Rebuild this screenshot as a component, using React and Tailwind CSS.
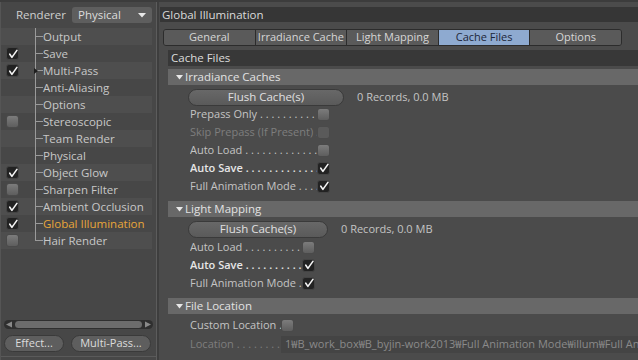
import React from 'react';

const font = { fontFamily: '"Open Sans", "Noto Sans CJK KR", sans-serif' };

const treeItems = [
  { label: 'Output', check: null },
  { label: 'Save', check: true },
  { label: 'Multi-Pass', check: true, arrow: true },
  { label: 'Anti-Aliasing', check: null },
  { label: 'Options', check: null },
  { label: 'Stereoscopic', check: false },
  { label: 'Team Render', check: null },
  { label: 'Physical', check: null },
  { label: 'Object Glow', check: true },
  { label: 'Sharpen Filter', check: false },
  { label: 'Ambient Occlusion', check: true },
  { label: 'Global Illumination', check: true, active: true },
  { label: 'Hair Render', check: false },
];

const tabs = ['General', 'Irradiance Cache', 'Light Mapping', 'Cache Files', 'Options'];

const dots = ' . . . . . . . . . . . . . . . . . . . . . . . .';

function Check({ on, dim }) {
  if (on) {
    return (
      <span className="flex h-[13px] w-[13px] shrink-0 items-center justify-center rounded-[3px] bg-[#222222] border border-[#444]">
        <svg width="10" height="10" viewBox="0 0 10 10">
          <path d="M1.8 5.2 L3.9 8.4 L8.9 1.4" fill="none" stroke="#f4f4f4" strokeWidth="1.6" strokeLinecap="round" strokeLinejoin="round" />
        </svg>
      </span>
    );
  }
  return (
    <span className={`block h-[13px] w-[13px] shrink-0 rounded-[3px] border border-[#4a4a4a] ${dim ? 'bg-[#5a5a5a]' : 'bg-gradient-to-b from-[#7c7c7c] to-[#5e5e5e]'}`} />
  );
}

function Option({ label, on, width, bold, dim }) {
  return (
    <div className="flex h-[18px] items-center pl-[22px]">
      <span
        className={`block overflow-hidden whitespace-nowrap text-[11px] leading-[18px] ${bold ? 'font-semibold text-[#e6e6e6]' : dim ? 'text-[#7e7e7e]' : 'text-[#c4c4c4]'}`}
        style={{ width }}
      >
        {label}
        {dots}
      </span>
      <Check on={on} dim={dim} />
    </div>
  );
}

function GroupHeader({ children }) {
  return (
    <div className="flex h-[16px] items-center bg-[#686868] pl-[8px] text-[11.5px] text-[#e2e2e2]">
      <svg width="7" height="5" viewBox="0 0 7 5" className="mr-[2px]">
        <path d="M0 0 L7 0 L3.5 4.5 Z" fill="#e8e8e8" />
      </svg>
      {children}
    </div>
  );
}

function Flush({ width, info }) {
  return (
    <div className="flex h-[20px] items-center pl-[20px] pt-[4px]">
      <div
        className="flex h-[17px] items-center justify-center rounded-full border border-[#3a3a3a] bg-gradient-to-b from-[#686868] to-[#5a5a5a] text-[11.5px] text-[#e0e0e0]"
        style={{ width }}
      >
        Flush Cache(s)
      </div>
      <span className="ml-[13px] text-[11px] text-[#c4c4c4]">{info}</span>
    </div>
  );
}

export default function App() {
  return (
    <div className="flex h-[360px] w-[638px] overflow-hidden bg-[#4b4b4b] border-t-2 border-[#3c3c3c]" style={font}>
      {/* left side */}
      <div className="flex w-[156px] shrink-0 flex-col border-l border-[#555] bg-[#474747]">
        <div className="flex h-[24px] items-center pt-[2px]">
          <span className="ml-[15px] text-[11.5px] text-[#cfcfcf]">Renderer</span>
          <div className="ml-[6px] flex h-[16px] w-[80px] items-center justify-between rounded-[3px] bg-[#5e5e5e] pl-[6px] pr-[6px] text-[11.5px] text-[#dcdcdc]">
            Physical
            <svg width="8" height="5" viewBox="0 0 8 5">
              <path d="M0 0 L8 0 L4 4.5 Z" fill="#e8e8e8" />
            </svg>
          </div>
        </div>
        <div className="mt-[2px] flex flex-col">
          {treeItems.map((it, i) => (
            <div key={it.label} className={`flex h-[17px] items-center ${i % 2 === 0 ? 'bg-[#4e4e4e]' : ''} mr-[4px]`}>
              <span className="flex w-[29px] shrink-0 pl-[5px]">
                {it.check !== null && <Check on={it.check} />}
              </span>
              <span className="relative h-[17px] w-[13px] shrink-0">
                <span className={`absolute left-[5px] top-0 w-px bg-[#9a9a9a] ${i === treeItems.length - 1 ? 'h-[9px]' : 'h-[17px]'}`} />
                <span className="absolute left-[5px] top-[8px] h-px w-[8px] bg-[#9a9a9a]" />
                {it.arrow && (
                  <svg width="4" height="6" viewBox="0 0 4 6" className="absolute left-[4px] top-[6px]">
                    <path d="M0 0 L4 3 L0 6 Z" fill="#1e1e1e" />
                  </svg>
                )}
              </span>
              <span className={`whitespace-nowrap text-[11.5px] ${it.active ? 'text-[#e8a63a]' : 'text-[#c8c8c8]'}`}>{it.label}</span>
            </div>
          ))}
        </div>
        <div className="flex-1" />
        <div className="mx-[3px] flex h-[9px] items-center rounded-full bg-[#2f2f2f] px-[1px]">
          <svg width="8" height="7" viewBox="0 0 8 7">
            <path d="M1 3.5 L7 0.5 L7 6.5 Z" fill="#8a8a8a" />
          </svg>
          <div className="mx-[2px] h-[7px] flex-1 rounded-full bg-[#6c6c6c]" />
          <svg width="8" height="7" viewBox="0 0 8 7">
            <path d="M7 3.5 L1 0.5 L1 6.5 Z" fill="#8a8a8a" />
          </svg>
        </div>
        <div className="mt-[6px] flex gap-[7px] px-[3px]">
          <div className="flex h-[17px] w-[60px] items-center justify-center rounded-full border border-[#3a3a3a] bg-[#5e5e5e] text-[11px] text-[#dcdcdc]">Effect...</div>
          <div className="flex h-[17px] w-[80px] items-center justify-center rounded-full border border-[#3a3a3a] bg-[#5e5e5e] text-[11px] text-[#dcdcdc]">Multi-Pass...</div>
        </div>
        <div className="mt-[4px] h-[4px] border-t border-[#5a5a5a]" />
      </div>

      {/* divider */}
      <div className="w-[3px] shrink-0 border-l border-[#5c5c5c] bg-[#3e3e3e]" />

      {/* right side */}
      <div className="flex flex-1 flex-col pl-[1px] pt-[5px]">
        <div className="flex h-[15px] items-center bg-[#363636] pl-[2px] text-[11.5px] text-[#dadada]">Global Illumination</div>
        <div className="ml-[3px] mt-[7px] flex h-[17px] w-[459px] overflow-hidden rounded-[3px] border border-[#2c2c2c]">
          {tabs.map((t, i) => (
            <div
              key={t}
              className={`flex flex-1 items-center justify-center text-[11px] ${i > 0 ? 'border-l border-[#2c2c2c]' : ''} ${t === 'Cache Files' ? 'bg-[#8eaad0] text-[#1c2638]' : 'bg-[#5a5a5a] text-[#d6d6d6]'}`}
            >
              {t}
            </div>
          ))}
        </div>
        <div className="ml-[8px] mt-[4px] flex flex-col">
          <div className="flex h-[16px] items-center bg-[#383838] pl-[3px] text-[11.5px] text-[#dcdcdc]">Cache Files</div>
          <div className="mt-[3px]">
            <GroupHeader>Irradiance Caches</GroupHeader>
          </div>
          <Flush width={156} info="0 Records, 0.0 MB" />
          <Option label="Prepass Only" width={127} />
          <Option label="Skip Prepass (If Present)" width={127} dim />
          <Option label="Auto Load" width={127} />
          <Option label="Auto Save" width={127} on bold />
          <Option label="Full Animation Mode" width={127} on />
          <div className="mt-[6px]">
            <GroupHeader>Light Mapping</GroupHeader>
          </div>
          <Flush width={140} info="0 Records, 0.0 MB" />
          <div className="mt-[1px]">
            <Option label="Auto Load" width={112} />
            <Option label="Auto Save" width={112} on bold />
            <Option label="Full Animation Mode" width={112} on />
          </div>
          <div className="mt-[6px]">
            <GroupHeader>File Location</GroupHeader>
          </div>
          <div className="mt-[2px]">
            <Option label="Custom Location" width={91} />
          </div>
          <div className="mt-[1px] flex h-[18px] items-center pl-[22px]">
            <span className="block w-[91px] shrink-0 overflow-hidden whitespace-nowrap text-[11px] text-[#7e7e7e]">
              Location{dots}
            </span>
            <div className="flex h-[17px] min-w-0 flex-1 items-center overflow-hidden whitespace-nowrap bg-[#444444] pl-[4px] text-[11px] text-[#8a8a8a]">
              1₩B_work_box₩B_byjin-work2013₩Full Animation Mode₩illum₩Full Animation
            </div>
          </div>
        </div>
      </div>
    </div>
  );
}
